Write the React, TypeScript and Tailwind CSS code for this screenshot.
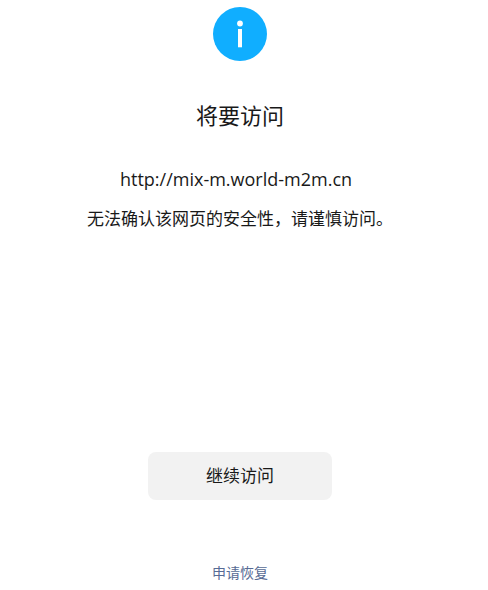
const TARGET_URL = "http://mix-m.world-m2m.cn";

function InfoIcon() {
  return (
    <svg viewBox="0 0 54 54" className="size-[54px]" aria-hidden="true">
      <circle cx="27" cy="27" r="27" fill="#10aeff" />
      <circle cx="27" cy="16.5" r="2.9" fill="#fff" />
      <path d="M25 22h4v18.3h-4z" fill="#fff" />
    </svg>
  );
}

export default function App() {
  return (
    <main className="flex flex-col items-center bg-white pt-[7px] pr-2 font-['Open_Sans','Noto_Sans_CJK_SC',sans-serif] text-[#191919]">
      <InfoIcon />
      <h1 className="mt-[38px] text-[22px] leading-8">将要访问</h1>
      <p className="mt-9 pr-2 text-lg leading-6">{TARGET_URL}</p>
      <p className="mt-4 text-[17px] leading-6">
        无法确认该网页的安全性，请谨慎访问。
      </p>
      <button
        type="button"
        className="mt-[221px] h-12 w-[184px] rounded-lg bg-[#f2f2f2] text-[17px] leading-6"
      >
        继续访问
      </button>
      <a href="#restore" className="mt-[63px] text-sm leading-5 text-[#576b95]">
        申请恢复
      </a>
    </main>
  );
}
